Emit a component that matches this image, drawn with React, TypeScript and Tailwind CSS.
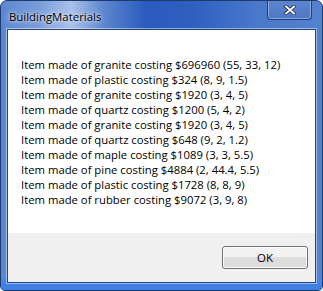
import React from "react";

const lines = [
  "Item made of granite costing $696960 (55, 33, 12)",
  "Item made of plastic costing $324 (8, 9, 1.5)",
  "Item made of granite costing $1920 (3, 4, 5)",
  "Item made of quartz costing $1200 (5, 4, 2)",
  "Item made of granite costing $1920 (3, 4, 5)",
  "Item made of quartz costing $648 (9, 2, 1.2)",
  "Item made of maple costing $1089 (3, 3, 5.5)",
  "Item made of pine costing $4884 (2, 44.4, 5.5)",
  "Item made of plastic costing $1728 (8, 8, 9)",
  "Item made of rubber costing $9072 (3, 9, 8)",
];

const font = '"Segoe UI", "Open Sans", sans-serif';

export default function App() {
  return (
    <div className="w-[323px] h-[291px] bg-white">
      <div
        className="relative w-[323px] h-[291px] rounded-t-[7px] rounded-b-[5px] border border-[#1c3a6e] flex flex-col overflow-hidden"
        style={{
          background:
            "linear-gradient(90deg, #5b86cf 0%, #7a9ddb 12%, #a9c1ea 22%, #5d86cf 32%, #2b5bbd 45%, #2f60c0 60%, #4a78ca 80%, #5482d0 100%)",
        }}
      >
        <div className="absolute inset-x-0 bottom-0 h-[12px] bg-gradient-to-b from-[#4a86de] to-[#3b7ee6]" />
        <div className="relative h-[28px] flex items-center pl-[8px] pt-[3px]">
          <span
            className="text-[11.4px] text-black"
            style={{ fontFamily: font, textShadow: "0 0 6px rgba(255,255,255,0.8), 0 0 3px rgba(255,255,255,0.8)" }}
          >
            BuildingMaterials
          </span>
        </div>
        <div className="absolute top-[-1px] right-[10px] w-[45px] h-[20px] rounded-b-[4px] border border-[#1f3e78] border-t-0 bg-gradient-to-b from-[#5e86cf] to-[#4d77c6] shadow-[inset_0_0_0_1px_rgba(255,255,255,0.35)] flex items-center justify-center">
          <svg width="12" height="10" viewBox="0 0 12 10">
            <path d="M2 1.5 L10 8.5 M10 1.5 L2 8.5" stroke="#2a3550" strokeWidth="3.6" strokeLinecap="square" />
            <path d="M2 1.5 L10 8.5 M10 1.5 L2 8.5" stroke="#ffffff" strokeWidth="1.8" strokeLinecap="square" />
          </svg>
        </div>
        <div className="relative mx-[6px] mb-[7px] flex-1 border border-[#27457a] shadow-[0_0_0_1px_rgba(255,255,255,0.45)] flex flex-col">
          <div
            className="bg-white h-[203px] pl-[13px] pt-[27px] text-[11.3px] leading-[15px] text-black"
            style={{ fontFamily: font }}
          >
            {lines.map((l, i) => (
              <div key={i} className="whitespace-nowrap">{l}</div>
            ))}
          </div>
          <div className="flex-1 bg-[#f0f0f0] flex justify-end items-start pt-[13px] pr-[7px]">
            <button
              className="w-[86px] h-[23px] rounded-[3px] border border-[#707070] bg-gradient-to-b from-[#f2f2f2] from-50% to-[#dddddd] to-50% shadow-[inset_0_0_0_1px_#fcfcfc] text-[11.5px] text-black"
              style={{ fontFamily: font }}
            >
              OK
            </button>
          </div>
        </div>
      </div>
    </div>
  );
}
